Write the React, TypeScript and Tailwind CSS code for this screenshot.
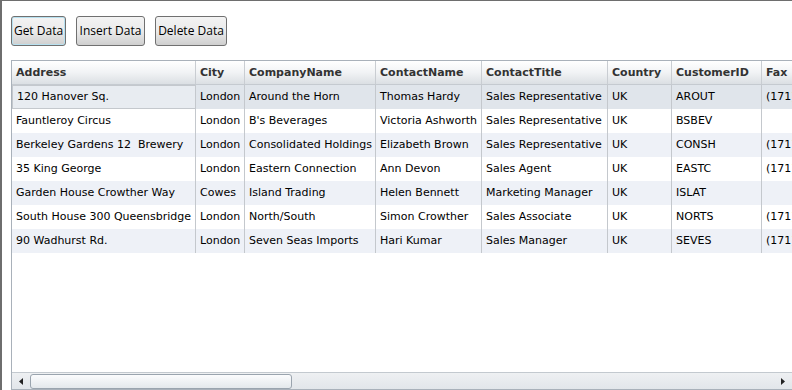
import React from 'react';

const columns = [
  { key: 'Address', width: 184 },
  { key: 'City', width: 49 },
  { key: 'CompanyName', width: 131 },
  { key: 'ContactName', width: 106 },
  { key: 'ContactTitle', width: 126 },
  { key: 'Country', width: 64 },
  { key: 'CustomerID', width: 90 },
  { key: 'Fax', width: 80 },
];

const rows = [
  ['120 Hanover Sq.', 'London', 'Around the Horn', 'Thomas Hardy', 'Sales Representative', 'UK', 'AROUT', '(171) 555-6750'],
  ['Fauntleroy Circus', 'London', "B's Beverages", 'Victoria Ashworth', 'Sales Representative', 'UK', 'BSBEV', ''],
  ['Berkeley Gardens 12  Brewery', 'London', 'Consolidated Holdings', 'Elizabeth Brown', 'Sales Representative', 'UK', 'CONSH', '(171) 555-9199'],
  ['35 King George', 'London', 'Eastern Connection', 'Ann Devon', 'Sales Agent', 'UK', 'EASTC', '(171) 555-3373'],
  ['Garden House Crowther Way', 'Cowes', 'Island Trading', 'Helen Bennett', 'Marketing Manager', 'UK', 'ISLAT', ''],
  ['South House 300 Queensbridge', 'London', 'North/South', 'Simon Crowther', 'Sales Associate', 'UK', 'NORTS', '(171) 555-2530'],
  ['90 Wadhurst Rd.', 'London', 'Seven Seas Imports', 'Hari Kumar', 'Sales Manager', 'UK', 'SEVES', '(171) 555-5646'],
];

const btn =
  'h-[30px] px-0 rounded-[3px] border border-[#707070] bg-gradient-to-b from-[#f3f3f3] via-[#ebebeb] to-[#cfcfcf] text-[12px] text-black leading-none whitespace-nowrap';

export default function App() {
  return (
    <div className="w-[792px] h-[390px] bg-white border-t border-l-2 border-[#6e6e6e] overflow-hidden flex flex-col [font-family:'DejaVu_Sans',Verdana,sans-serif]">
      {/* toolbar */}
      <div className="flex gap-[10px] pl-[9px] pt-[15px] h-[59px] [font-family:'Open_Sans','Noto_Sans',sans-serif]">
        <button className={btn + ' w-[55px] border-[#3c7fb1] shadow-[inset_0_0_0_1px_#b7e1f0]'}>Get Data</button>
        <button className={btn + ' w-[69px]'}>Insert Data</button>
        <button className={btn + ' w-[72px]'}>Delete Data</button>
      </div>

      {/* grid */}
      <div className="ml-[9px] flex-1 border border-r-0 border-[#a9b1ba] flex flex-col overflow-hidden">
        <div className="flex-1 overflow-hidden">
          <div className="flex h-[24px] bg-gradient-to-b from-[#ffffff] via-[#f1f3f5] to-[#dbdfe3] border-b border-[#c5cad0]">
            {columns.map((c) => (
              <div
                key={c.key}
                style={{ width: c.width }}
                className="shrink-0 border-r border-[#c9cdd2] pl-[4px] pt-[2px] flex items-center text-[11px] font-bold text-[#333] whitespace-nowrap overflow-hidden"
              >
                {c.key}
              </div>
            ))}
          </div>
          {rows.map((r, i) => (
            <div
              key={i}
              className={
                'flex h-[24px] ' +
                (i === 0 ? 'bg-[#e0e5eb]' : i % 2 === 0 ? 'bg-[#eef1f7]' : 'bg-white')
              }
            >
              {r.map((v, j) => (
                <div
                  key={j}
                  style={{ width: columns[j].width }}
                  className={
                    'shrink-0 border-r border-[#c4c8cd] pl-[4px] flex items-center text-[11px] text-black whitespace-pre overflow-hidden ' +
                    (i === 0 && j === 0 ? 'border border-[#84c7d5] bg-[#e8ecf1] pl-[3px]' : '')
                  }
                >
                  {v}
                </div>
              ))}
            </div>
          ))}
        </div>

        {/* horizontal scrollbar */}
        <div className="h-[17px] border-t border-[#c3c9cf] bg-gradient-to-b from-[#eef0f2] to-[#e2e6ea] flex items-center">
          <div className="w-[18px] flex justify-center items-center">
            <svg width="4" height="7" viewBox="0 0 4 7">
              <path d="M4 0 L0 3.5 L4 7 Z" fill="#222" />
            </svg>
          </div>
          <div className="w-[262px] h-[15px] rounded-[3px] border border-[#9aa4ae] bg-gradient-to-b from-[#fbfcfd] to-[#e4e8ec]" />
          <div className="flex-1" />
          <div className="w-[18px] flex justify-center items-center">
            <svg width="4" height="7" viewBox="0 0 4 7">
              <path d="M0 0 L4 3.5 L0 7 Z" fill="#222" />
            </svg>
          </div>
        </div>
      </div>
    </div>
  );
}
